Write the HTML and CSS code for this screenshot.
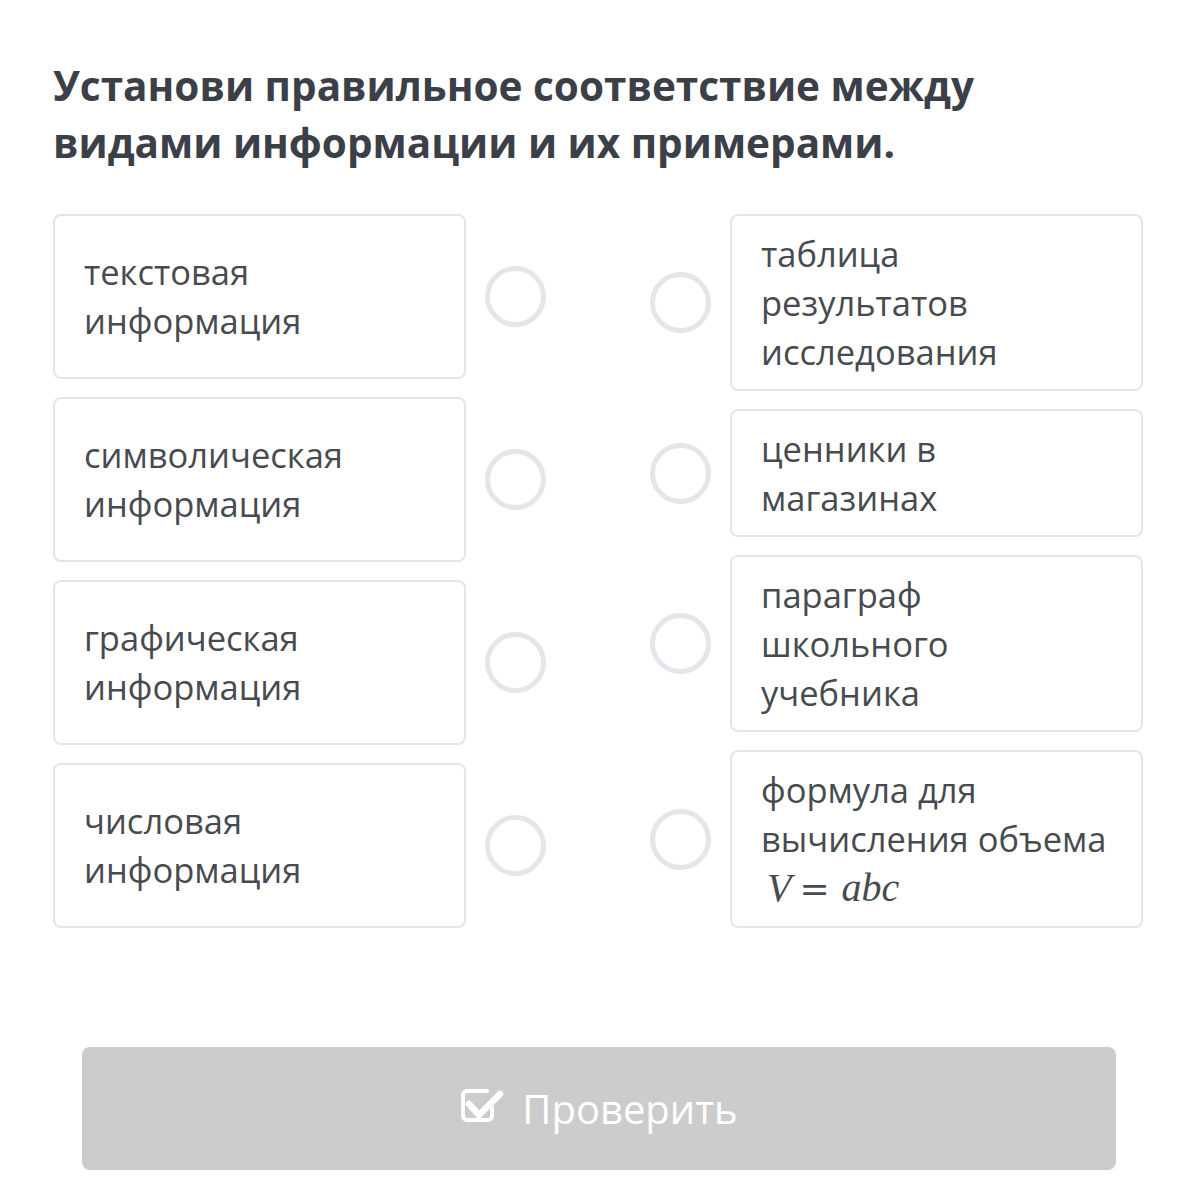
FILE: index.html
```html
<!DOCTYPE html>
<html lang="ru">
<head>
    <meta charset="UTF-8">
    <title>Соответствие</title>
    <link rel="stylesheet" href="styles.css">
</head>
<body>

<div id="task">
    <div id="task-title">
        Установи правильное соответствие между видами информации и их примерами.
    </div>

    <div class="match">
        <div class="match-col col-left">
            <div class="match-item">
                <div class="card">текстовая<br>информация</div>
                <div class="dot"></div>
            </div>
            <div class="match-item">
                <div class="card">символическая<br>информация</div>
                <div class="dot"></div>
            </div>
            <div class="match-item">
                <div class="card">графическая<br>информация</div>
                <div class="dot"></div>
            </div>
            <div class="match-item">
                <div class="card">числовая<br>информация</div>
                <div class="dot"></div>
            </div>
        </div>

        <div class="match-col col-right">
            <div class="match-item">
                <div class="dot"></div>
                <div class="card">таблица<br>результатов<br>исследования</div>
            </div>
            <div class="match-item">
                <div class="dot"></div>
                <div class="card">ценники в<br>магазинах</div>
            </div>
            <div class="match-item">
                <div class="dot"></div>
                <div class="card">параграф<br>школьного<br>учебника</div>
            </div>
            <div class="match-item">
                <div class="dot"></div>
                <div class="card">формула для<br>вычисления объема<br><span class="math"><i>V</i><span class="eq">=</span><i>abc</i></span></div>
            </div>
        </div>
    </div>

    <div id="btn-check">
        <svg class="btn-icon" width="44" height="36" viewBox="0 0 44 36">
            <path d="M32 19v9a4 4 0 0 1-4 4H7a4 4 0 0 1-4-4V7a4 4 0 0 1 4-4h20" fill="none" stroke="#fff" stroke-width="4" stroke-linecap="round"/>
            <path d="M9 16l10 11L40 6" fill="none" stroke="#fff" stroke-width="6.5" stroke-linecap="round" stroke-linejoin="round"/>
        </svg>
        <span class="btn-text">Проверить</span>
    </div>
</div>

</body>
</html>
```

FILE: styles.css
```css
body {
    margin: 0;
    padding: 0;
    background-color: #fff;
    font-family: "Open Sans", "Noto Sans", sans-serif;
}

#task {
    padding: 57px 56px 30px 53px;
}

#task-title {
    width: 960px;
    font-size: 40.5px;
    font-weight: 700;
    line-height: 57px;
    color: #3b4048;
}

.match {
    display: grid;
    grid-template-columns: 492px 493px;
    justify-content: space-between;
    margin-top: 43px;
}

.match-col {
    display: flex;
    flex-direction: column;
    gap: 18px;
}

.col-left .match-item {
    flex: 1;
}

.match-item {
    display: flex;
    align-items: center;
    gap: 19px;
}

.card {
    flex: none;
    width: 413px;
    box-sizing: border-box;
    align-self: stretch;
    padding: 13px 29px;
    border: 2px solid #e3e6e9;
    border-radius: 8px;
    font-size: 34.5px;
    line-height: 49px;
    color: #474b50;
}

.col-left .card {
    padding-top: 31px;
}

.dot {
    flex: none;
    width: 51px;
    height: 51px;
    border: 5px solid #e3e6ea;
    border-radius: 50%;
}

.math {
    font-family: "Liberation Serif", "DejaVu Serif", serif;
    font-size: 40px;
    padding-left: 6px;
}

.math i {
    font-style: italic;
}

.eq {
    font-family: "DejaVu Serif", serif;
    font-size: 36px;
    padding: 0 12px 0 8px;
}

#btn-check {
    display: flex;
    align-items: center;
    justify-content: center;
    gap: 18px;
    height: 123px;
    margin: 119px 27px 0 29px;
    border-radius: 8px;
    background-color: #cccccc;
    color: #fff;
}

.btn-icon {
    margin-bottom: 6px;
}

.btn-text {
    font-size: 40px;
}
```
